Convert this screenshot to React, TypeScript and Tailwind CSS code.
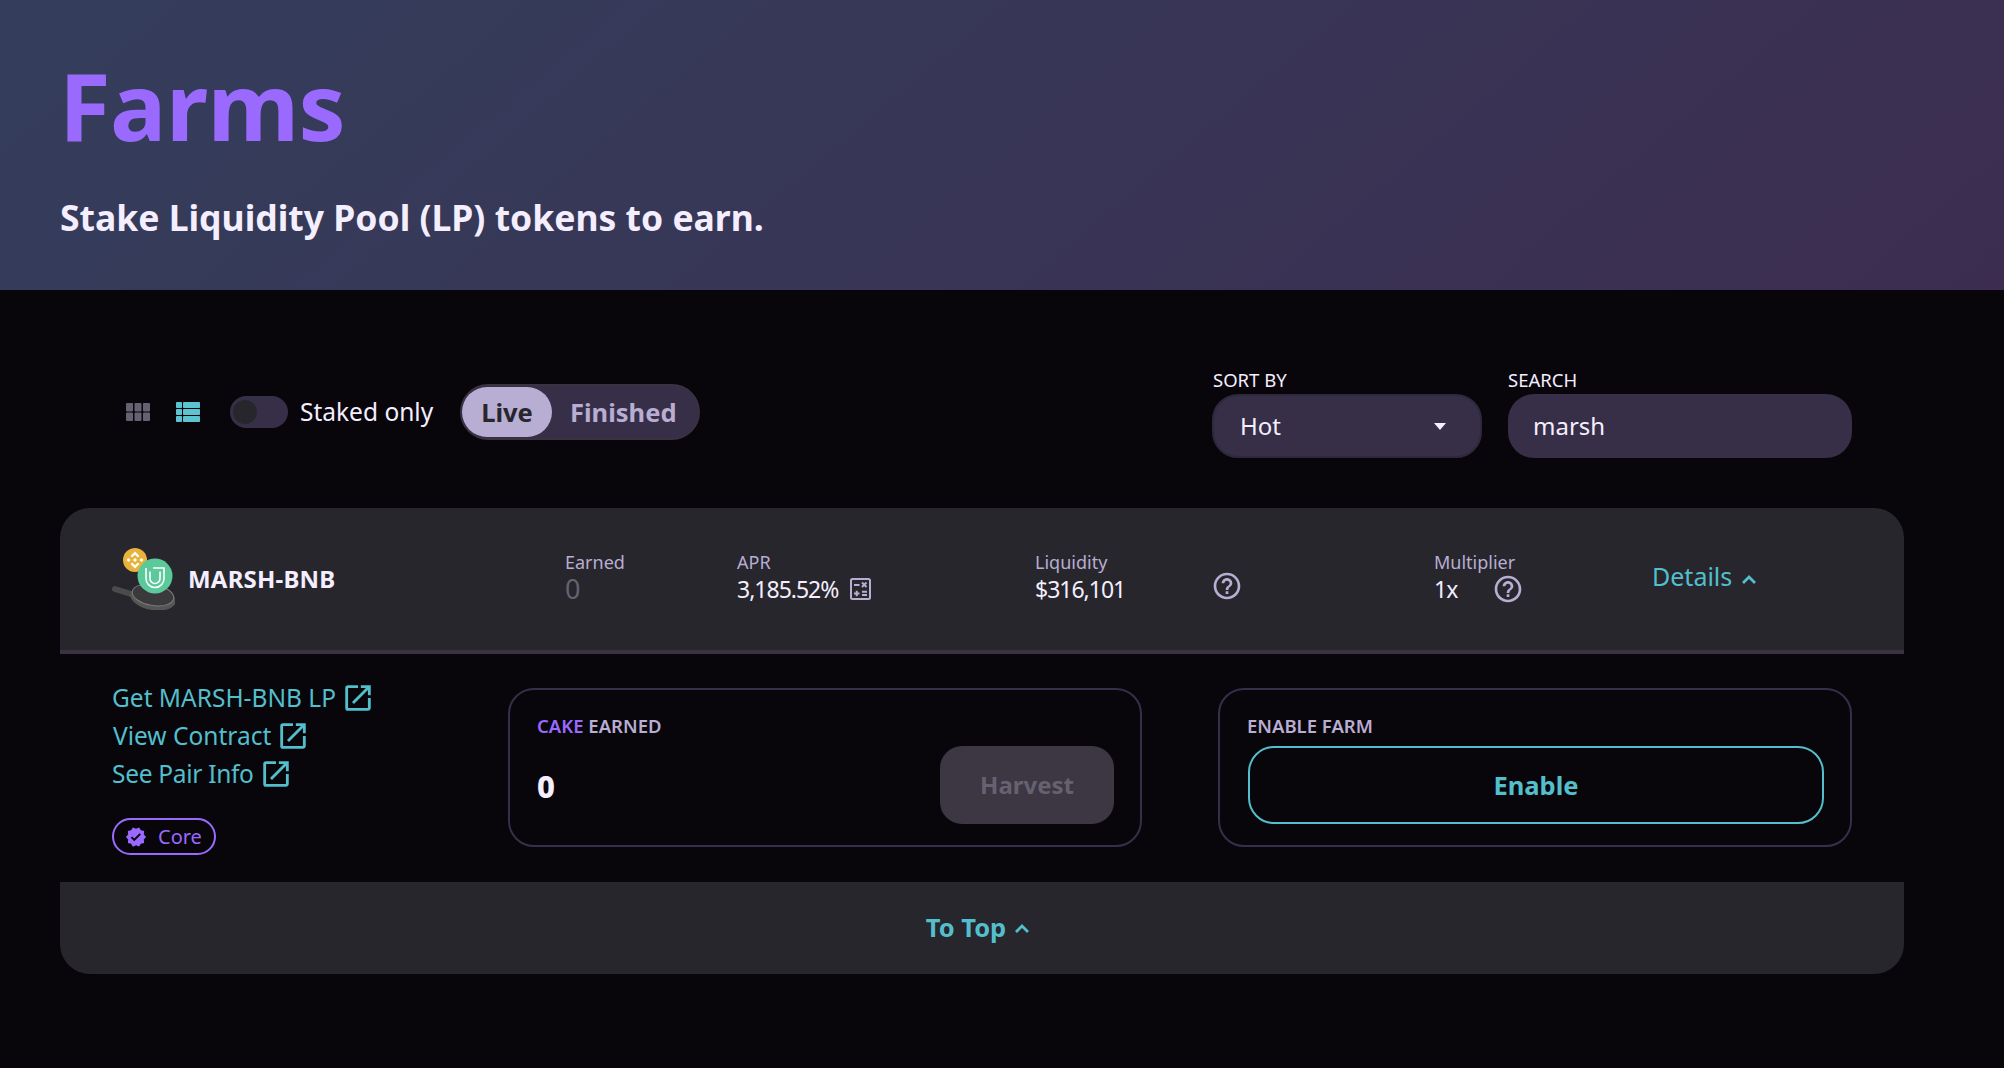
import type { ReactNode } from 'react';

const OPEN_PATH = 'M19 19H5V5h7V3H5a2 2 0 0 0-2 2v14a2 2 0 0 0 2 2h14c1.1 0 2-.9 2-2v-7h-2v7zM14 3v2h3.59l-9.83 9.83 1.41 1.41L19 6.41V10h2V3h-7z';
const HELP_PATH = 'M11 18h2v-2h-2v2zm1-16C6.48 2 2 6.48 2 12s4.48 10 10 10 10-4.48 10-10S17.52 2 12 2zm0 18c-4.41 0-8-3.59-8-8s3.59-8 8-8 8 3.59 8 8-3.59 8-8 8zm0-14c-2.21 0-4 1.79-4 4h2c0-1.1.9-2 2-2s2 .9 2 2c0 2-3 1.75-3 5h2c0-2.25 3-2.5 3-5 0-2.21-1.79-4-4-4z';
const VERIFIED_PATH = 'M23 12l-2.44-2.79.34-3.69-3.61-.82-1.89-3.2L12 2.96 8.6 1.5 6.71 4.69 3.1 5.5l.34 3.7L1 12l2.44 2.79-.34 3.7 3.61.82L8.6 22.5l3.4-1.47 3.4 1.46 1.89-3.19 3.61-.82-.34-3.69L23 12zm-12.91 4.72l-3.8-3.81 1.48-1.48 2.32 2.33 5.85-5.87 1.48 1.48-7.33 7.35z';

function Icon({ path, className }: { path: string; className: string }) {
    return (
        <svg viewBox="0 0 24 24" fill="currentColor" className={className}>
            <path d={path} />
        </svg>
    );
}

function Chevron({ className }: { className: string }) {
    return (
        <svg viewBox="0 0 16 12" fill="none" stroke="currentColor" strokeWidth="2.800" className={className}>
            <path d="M2 10l6-6 6 6" />
        </svg>
    );
}

function GridIcon() {
    return (
        <svg viewBox="0 0 24 18" className="w-[24px] h-[18px] text-[#666171]" fill="currentColor">
            {[0, 8.5, 17].map((x) => (
                <g key={x}>
                    <rect x={x} y="0" width="7" height="8.500" rx="1" />
                    <rect x={x} y="9.500" width="7" height="8.500" rx="1" />
                </g>
            ))}
        </svg>
    );
}

function ListIcon() {
    return (
        <svg viewBox="0 0 24 20" className="w-[24px] h-[20px] text-[#5cc3d0]" fill="currentColor">
            {[0, 7, 14].map((y) => (
                <g key={y}>
                    <rect x="0" y={y} width="6" height="6" rx="0.800" />
                    <rect x="7" y={y} width="17" height="6" rx="0.800" />
                </g>
            ))}
        </svg>
    );
}

function CalculatorIcon() {
    return (
        <svg viewBox="0 0 21 22" className="w-[21px] h-[22px] ml-[12px] shrink-0 text-[#b8add2]" fill="none" stroke="currentColor">
            <rect x="1" y="1" width="19" height="20" rx="1.500" strokeWidth="2" />
            <path d="M4 7h5.500M12 4.500l4.500 4.500M16.500 4.500l-4.500 4.500M4 15.500h5.500M6.750 12.750v5.500M12 13.750h5M12 17h5" strokeWidth="2" />
        </svg>
    );
}

function TokenLogo() {
    return (
        <svg viewBox="0 0 63 62" className="w-[63px] h-[62px] shrink-0">
            <path d="M3 41l16 5" stroke="#4b4b4b" strokeWidth="6" strokeLinecap="round" />
            <ellipse cx="41" cy="50" rx="23" ry="12" transform="rotate(10 41 50)" fill="#555555" />
            <ellipse cx="41" cy="47" rx="21" ry="10.500" transform="rotate(10 41 47)" fill="#3a3a3c" stroke="#7a7a7a" strokeWidth="1" />
            <circle cx="23" cy="12" r="12" fill="#e8b33b" />
            <path d="M23 3.500l4.500 4.500-1.600 1.600L23 6.700l-2.900 2.900L18.500 8zM23 20.500l4.500-4.500-1.600-1.600L23 17.300l-2.900-2.900-1.600 1.600zM23 10l2 2-2 2-2-2zM16.500 10l2 2-2 2-2-2zM29.500 10l2 2-2 2-2-2z" fill="#fff" />
            <circle cx="43" cy="28" r="17.500" fill="#5cc99b" />
            <path d="M34 20v10.500a9 9 0 0 0 18 0V20H41M38 23.500v7a5 5 0 0 0 10 0v-7" fill="none" stroke="#fff" strokeWidth="1.600" />
        </svg>
    );
}

function Stat({ label, width, children }: { label: string; width: string; children: ReactNode }) {
    return (
        <div className={`${width} shrink-0`}>
            <div className="text-[18px] leading-[22px] text-[#b8add2] -mt-[2px]">{label}</div>
            <div className="text-[23px] leading-[32px] tracking-[-1px] text-[#f4eeff] flex items-center">{children}</div>
        </div>
    );
}

function ExtLink({ label, className }: { label: string; className: string }) {
    return (
        <a className={`flex items-center gap-[5px] text-[24.500px] leading-[28px] text-[#53bfcc] ${className}`}>
            {label}
            <Icon path={OPEN_PATH} className="w-[34px] h-[34px] -my-[3px]" />
        </a>
    );
}

export default function App() {
    return (
        <div className="min-h-screen bg-[#08060b] font-['Noto_Sans',sans-serif] overflow-hidden">
            {/* Page header */}
            <div className="h-[290px] pl-[60px] pt-[50px] bg-[linear-gradient(139.73deg,#343e5c_0%,#3c2d50_100%)]">
                <h1 className="text-[94px] leading-[110px] font-bold tracking-[-0.5px] -ml-[1px] text-[#9a6aff]">Farms</h1>
                <p className="mt-[35px] text-[35.500px] leading-[44px] font-bold text-[#f4eeff]">
                    Stake Liquidity Pool (LP) tokens to earn.
                </p>
            </div>

            <div className="w-[1844px] ml-[60px]">
                {/* Controls */}
                <div className="mt-[83px] h-[85px] flex justify-between pl-[66px] pr-[52px]">
                    <div className="flex items-center h-[78px]">
                        <GridIcon />
                        <div className="ml-[26px]"><ListIcon /></div>
                        <div className="ml-[30px] w-[58px] h-[32px] rounded-full bg-[#372f47] flex items-center pl-[3px]">
                            <div className="w-[24px] h-[24px] rounded-full bg-[#27262c]" />
                        </div>
                        <span className="ml-[12px] w-[148px] text-[24.500px] text-[#f4eeff]">Staked only</span>
                        <div className="ml-[12px] w-[240px] h-[56px] rounded-full bg-[#372f47] border-2 border-[#383241] flex items-center font-bold text-[25.500px]">
                            <div className="w-[90px] h-[50px] rounded-full bg-[#b8add2] text-[#27262c] flex items-center justify-center">Live</div>
                            <div className="ml-[18px] text-[#b8add2]">Finished</div>
                        </div>
                    </div>
                    <div className="flex gap-[26px]">
                        <div className="w-[270px]">
                            <div className="text-[18.500px] leading-[21px] text-[#f4eeff] pl-[1px] -mt-[4px] mb-[4px]">SORT BY</div>
                            <div className="h-[64px] rounded-[26px] bg-[#372f47] border-2 border-[#2e293b] flex items-center justify-between pl-[26px] pr-[34px] text-[24px] text-[#f4eeff]">
                                Hot
                                <span className="w-0 h-0 border-x-[6px] border-x-transparent border-t-[7px] border-t-[#f4eeff]" />
                            </div>
                        </div>
                        <div className="w-[344px]">
                            <div className="text-[18.500px] leading-[21px] text-[#f4eeff] -mt-[4px] mb-[4px]">SEARCH</div>
                            <div className="h-[64px] rounded-[26px] bg-[#372f47] flex items-center pl-[25px] text-[24px] text-[#f4eeff]">marsh</div>
                        </div>
                    </div>
                </div>

                {/* Farm card */}
                <div className="mt-[50px] rounded-[30px] overflow-hidden bg-[#27262c]">
                    <div className="h-[142px] flex items-center pl-[52px]">
                        <div className="w-[453px] shrink-0 flex items-center gap-[13px]">
                            <TokenLogo />
                            <span className="text-[24px] font-bold tracking-[0.2px] text-[#f4eeff]">MARSH-BNB</span>
                        </div>
                        <Stat label="Earned" width="w-[172px]"><span className="text-[#666171] text-[27px] tracking-normal">0</span></Stat>
                        <Stat label="APR" width="w-[298px]">3,185.52%<CalculatorIcon /></Stat>
                        <Stat label="Liquidity" width="w-[178px]">$316,101</Stat>
                        <Icon path={HELP_PATH} className="w-[32px] h-[32px] text-[#b8add2] mt-[13px] -ml-[2px] mr-[191px] shrink-0" />
                        <div className="w-[218px] shrink-0 flex">
                            <Stat label="Multiplier" width="w-[58px]">1x</Stat>
                            <Icon path={HELP_PATH} className="w-[32px] h-[32px] text-[#b8add2] mt-[20px] shrink-0" />
                        </div>
                        <div className="flex items-center text-[25px] text-[#53bfcc] -mt-[5px]">
                            Details
                            <Chevron className="w-[16px] h-[12px] ml-[9px] mt-[4px]" />
                        </div>
                    </div>
                    <div className="h-[4px] bg-[#383241]" />

                    {/* Details panel */}
                    <div className="h-[228px] bg-[#08060b] flex pl-[52px] pt-[34px]">
                        <div className="w-[396px] shrink-0 -mt-[4px]">
                            <ExtLink label="Get MARSH-BNB LP" className="" />
                            <ExtLink label="View Contract" className="mt-[10px] ml-[1px]" />
                            <ExtLink label="See Pair Info" className="mt-[10px] tracking-[-0.3px]" />
                            <div className="mt-[30px] w-[104px] h-[37px] rounded-full border-2 border-[#9a6aff] flex items-center pl-[11px] gap-[11px] text-[#9a6aff] text-[20px]">
                                <Icon path={VERIFIED_PATH} className="w-[22px] h-[22px]" />
                                Core
                            </div>
                        </div>
                        <div className="w-[634px] h-[159px] rounded-[26px] border-2 border-[#372f47] pl-[27px] pr-[26px] pt-[24px]">
                            <div className="text-[18.500px] leading-[24px] font-semibold text-[#b8add2]">
                                <span className="text-[#9a6aff]">CAKE</span> EARNED
                            </div>
                            <div className="mt-[8px] flex justify-between items-center">
                                <span className="text-[31px] font-extrabold text-[#f4eeff] mt-[2px]">0</span>
                                <div className="w-[174px] h-[78px] rounded-[22px] bg-[#3c3742] text-[#666171] text-[24px] font-bold flex items-center justify-center">Harvest</div>
                            </div>
                        </div>
                        <div className="ml-[76px] w-[634px] h-[159px] rounded-[26px] border-2 border-[#372f47] pl-[28px] pr-[26px] pt-[24px]">
                            <div className="text-[18.500px] leading-[24px] font-semibold text-[#b8add2] -ml-[1px]">ENABLE FARM</div>
                            <div className="mt-[8px] h-[78px] rounded-[26px] border-2 border-[#53bfcc] text-[#53bfcc] text-[25.500px] font-bold flex items-center justify-center">Enable</div>
                        </div>
                    </div>

                    {/* To top */}
                    <div className="h-[92px] flex items-center justify-center text-[25.500px] font-bold text-[#53bfcc] gap-[8px] pr-[8px] pb-[2px]">
                        To Top
                        <Chevron className="w-[16px] h-[12px] mt-[2px]" />
                    </div>
                </div>
            </div>
        </div>
    );
}
